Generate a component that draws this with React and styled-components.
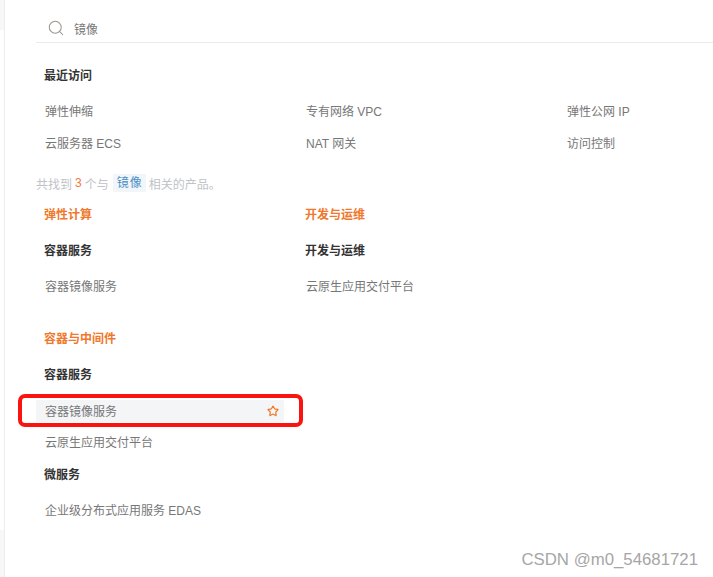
import React from "react";
import styled, { createGlobalStyle } from "styled-components";
import { Search, Star } from "lucide-react";

const GlobalStyle = createGlobalStyle`
  html, body {
    margin: 0;
    padding: 0;
    background: #fff;
  }
  body {
    font-family: "Liberation Sans", "Noto Sans CJK SC", sans-serif;
    font-size: 12px;
    color: #666;
  }
`;

const Page = styled.div`
  position: relative;
  display: flex;
  width: 713px;
  height: 577px;
  overflow: hidden;
`;

const Rail = styled.div`
  width: 4px;
  flex: none;
  display: flex;
  flex-direction: column;
  justify-content: space-between;
  border-right: 1px solid #ededed;
`;

const RailBlock = styled.div`
  height: ${p => p.$h}px;
  background: #f7f7f7;
`;

const Panel = styled.div`
  flex: 1;
  padding: 14px 0 0 31px;
  min-width: 0;
`;

const SearchBar = styled.div`
  display: flex;
  align-items: center;
  gap: 9px;
  height: 28px;
  padding-left: 11px;
  border-bottom: 1px solid #ebebeb;
  color: #777;
  svg {
    color: #9b9690;
  }
`;

const Section = styled.div`
  display: flex;
  flex-direction: column;
  gap: 16px;
  padding: 23px 0 0 8px;
`;

const Heading = styled.div`
  height: 20px;
  line-height: 20px;
  font-weight: 700;
  color: ${p => (p.$accent ? "#f0782d" : "#333")};
`;

const RecentGrid = styled.div`
  display: grid;
  grid-template-columns: 261px 261px 1fr;
  row-gap: 12px;
`;

const Item = styled.div`
  height: 20px;
  line-height: 20px;
  padding-left: 1px;
  color: #777;
`;

const Found = styled.div`
  display: flex;
  align-items: center;
  height: 18px;
  margin-top: 20px;
  color: #bfc3c7;
`;

const Count = styled.span`
  margin: 0 3px;
  color: #f07a3a;
`;

const Keyword = styled.span`
  height: 18px;
  line-height: 18px;
  margin: 0 3px 0 4px;
  padding: 0 3px 0 4px;
  letter-spacing: 1px;
  background: #f3f6f9;
  color: #4a90c8;
`;

const Categories = styled.div`
  display: grid;
  grid-template-columns: 261px 1fr;
  padding: 13px 0 0 8px;
`;

const Category = styled.div`
  display: flex;
  flex-direction: column;
  gap: 16px;
`;

const Block = styled.div`
  display: flex;
  flex-direction: column;
  gap: 12px;
`;

const Stack = styled.div`
  display: flex;
  flex-direction: column;
  gap: 16px;
`;

const Lower = styled.div`
  display: flex;
  flex-direction: column;
  gap: 16px;
  width: 240px;
  margin-top: 32px;
  padding-left: 8px;
`;

const ActiveRow = styled.div`
  position: relative;
  display: flex;
  align-items: center;
  justify-content: space-between;
  height: 22px;
  margin: -1px 0 -1px -8px;
  padding: 0 5px 2px 9px;
  box-sizing: border-box;
  background: #f3f5f7;
  color: #777;
  svg {
    color: #f0782d;
    margin-top: 2px;
  }
`;

const RedFrame = styled.div`
  position: absolute;
  left: -18px;
  right: -19px;
  top: -6px;
  bottom: -5px;
  border: 4px solid #f9140f;
  border-radius: 7px;
`;

const Watermark = styled.div`
  position: absolute;
  right: 15px;
  bottom: 7px;
  font-size: 16.8px;
  line-height: 20px;
  color: #a6a6a6;
`;

export default function App() {
  return (
    <Page>
      <GlobalStyle />
      <Rail>
        <RailBlock $h={30} />
        <RailBlock $h={47} />
      </Rail>
      <Panel>
        <SearchBar>
          <Search size={18} strokeWidth={1.4} />
          <span>镜像</span>
        </SearchBar>
        <Section>
          <Heading>最近访问</Heading>
          <RecentGrid>
            <Item>弹性伸缩</Item>
            <Item>专有网络 VPC</Item>
            <Item>弹性公网 IP</Item>
            <Item>云服务器 ECS</Item>
            <Item>NAT 网关</Item>
            <Item>访问控制</Item>
          </RecentGrid>
        </Section>
        <Found>
          共找到<Count>3</Count>个与<Keyword>镜像</Keyword>相关的产品。
        </Found>
        <Categories>
          <Category>
            <Heading $accent>弹性计算</Heading>
            <Heading>容器服务</Heading>
            <Item>容器镜像服务</Item>
          </Category>
          <Category>
            <Heading $accent>开发与运维</Heading>
            <Heading>开发与运维</Heading>
            <Item>云原生应用交付平台</Item>
          </Category>
        </Categories>
        <Lower>
          <Heading $accent>容器与中间件</Heading>
          <Stack>
            <Heading>容器服务</Heading>
            <Block>
              <ActiveRow>
                容器镜像服务
                <Star size={12} strokeWidth={2.4} />
                <RedFrame />
              </ActiveRow>
              <Item>云原生应用交付平台</Item>
              <Heading>微服务</Heading>
            </Block>
            <Item>企业级分布式应用服务 EDAS</Item>
          </Stack>
        </Lower>
      </Panel>
      <Watermark>CSDN @m0_54681721</Watermark>
    </Page>
  );
}
